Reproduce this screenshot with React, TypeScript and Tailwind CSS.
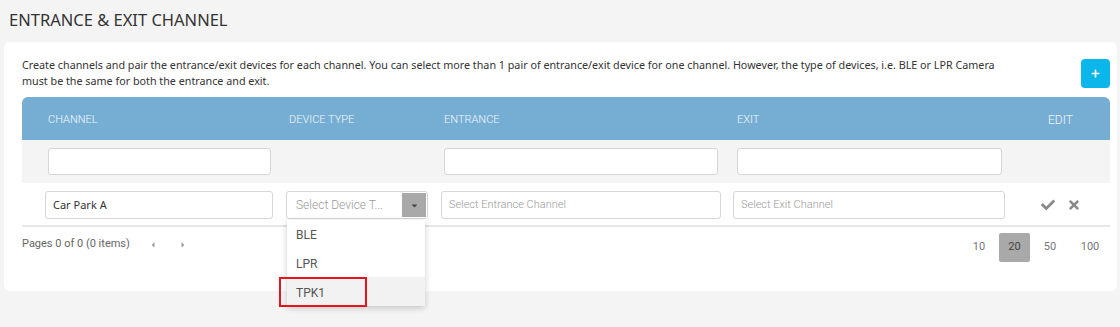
import { FaCheck, FaTimes, FaCaretDown, FaCaretLeft, FaCaretRight, FaPlus } from "react-icons/fa";

const inputCls =
  "h-full rounded-[3px] border border-[#d6d6d6] bg-white text-[11px] text-[#333] px-[7px] flex items-center";

export default function App() {
  return (
    <div
      className="w-[1120px] h-[327px] bg-[#f4f4f4] overflow-hidden text-[#333]"
      style={{ fontFamily: '"Noto Sans", sans-serif' }}
    >
      <h1 className="pl-[9px] pt-[8px] h-[42px] text-[16.5px] text-[#333]">
        ENTRANCE &amp; EXIT CHANNEL
      </h1>

      <div className="relative ml-[4px] w-[1113px] h-[249px] rounded-[6px] bg-white pl-[18px] pr-[7px]">
        {/* description + add */}
        <div className="flex h-[55px] items-start">
          <p className="pt-[15px] text-[10.75px] leading-[16px] text-[#333] w-[1059px]">
            Create channels and pair the entrance/exit devices for each channel. You can select more than 1 pair of
            entrance/exit device for one channel. However, the type of devices, i.e. BLE or LPR Camera
            <br />
            must be the same for both the entrance and exit.
          </p>
          <button className="mt-[17px] flex h-[29px] w-[29px] shrink-0 items-center justify-center rounded-[4px] bg-[#0bb6ea] text-white">
            <FaPlus className="text-[9px]" />
          </button>
        </div>

        {/* table */}
        <div className="w-[1088px]" style={{ fontFamily: "Roboto, sans-serif" }}>
          <div className="grid h-[43px] grid-cols-[253px_155px_295px_285px_100px] items-center rounded-t-[6px] bg-[#76aed3] pt-[3px] text-[11px] font-light text-white/90">
            <div className="pl-[26px]">CHANNEL</div>
            <div className="pl-[14px]">DEVICE TYPE</div>
            <div className="pl-[14px]">ENTRANCE</div>
            <div className="pl-[12px]">EXIT</div>
            <div className="pl-[38px] text-[12px]">EDIT</div>
          </div>

          <div className="grid h-[43px] grid-cols-[253px_155px_295px_285px_100px] items-center bg-[#f4f4f4]">
            <div className="ml-[26px] h-[27px] w-[223px]">
              <div className={inputCls} />
            </div>
            <div />
            <div className="ml-[14px] h-[27px] w-[274px]">
              <div className={inputCls} />
            </div>
            <div className="ml-[12px] h-[27px] w-[265px]">
              <div className={inputCls} />
            </div>
            <div />
          </div>

          <div className="grid h-[44px] grid-cols-[253px_155px_295px_285px_100px] items-center border-b-2 border-[#e6e6e6] pt-[2px]">
            <div className="ml-[23px] h-[28px] w-[228px]">
              <div className={inputCls} style={{ fontFamily: '"Noto Sans", sans-serif' }}>
                Car Park A
              </div>
            </div>
            <div className="relative ml-[11px] h-[28px] w-[142px]">
              <div className="flex h-full overflow-hidden rounded-[3px] border border-[#d6d6d6] bg-white">
                <div className="flex flex-1 items-center pl-[9px] text-[12px] font-light text-[#999]">
                  Select Device T...
                </div>
                <div className="my-[1px] mr-[1px] flex w-[24px] items-center justify-center bg-[#a9a9a9]">
                  <FaCaretDown className="text-[9px] text-[#444]" />
                </div>
              </div>
              <div className="absolute left-[1px] top-[29px] z-10 w-[138px] rounded-b-[3px] bg-white text-[12px] text-[#555] shadow-[0_2px_6px_rgba(0,0,0,0.2)]">
                <div className="flex h-[28px] items-center pl-[9px] pt-[2px]">BLE</div>
                <div className="flex h-[29px] items-center pl-[9px] pt-[2px]">LPR</div>
                <div className="flex h-[29px] items-center bg-[#f2f2f2] pl-[9px] pt-[2px]">TPK1</div>
              </div>
              <div className="absolute left-[-7px] top-[86px] z-20 h-[30px] w-[88px] border-2 border-[#e8141b]" />
            </div>
            <div className="ml-[11px] h-[28px] w-[280px]">
              <div className={`${inputCls} font-light text-[#999]`}>Select Entrance Channel</div>
            </div>
            <div className="ml-[8px] h-[28px] w-[272px]">
              <div className={`${inputCls} font-light text-[#999]`}>Select Exit Channel</div>
            </div>
            <div className="flex items-center gap-[12px] pl-[31px] text-[#8a8a8a]">
              <FaCheck className="text-[14px]" />
              <FaTimes className="text-[14px]" />
            </div>
          </div>

          {/* pager */}
          <div className="flex h-[40px] items-center justify-between">
            <div className="flex items-center text-[11px] text-[#666]">
              <span className="-mt-[5px]">Pages 0 of 0 (0 items)</span>
              <FaCaretLeft className="-mt-[5px] ml-[19px] text-[8px] text-[#999]" />
              <FaCaretRight className="-mt-[5px] ml-[22px] text-[8px] text-[#999]" />
            </div>
            <div className="flex items-center text-[11px] text-[#777]">
              <span className="w-[40px] text-center">10</span>
              <span className="flex h-[29px] w-[31px] items-center justify-center rounded-[2px] bg-[#a9a9a9] text-[#444]">
                20
              </span>
              <span className="w-[40px] text-center">50</span>
              <span className="w-[40px] text-center">100</span>
            </div>
          </div>
        </div>
      </div>
    </div>
  );
}
